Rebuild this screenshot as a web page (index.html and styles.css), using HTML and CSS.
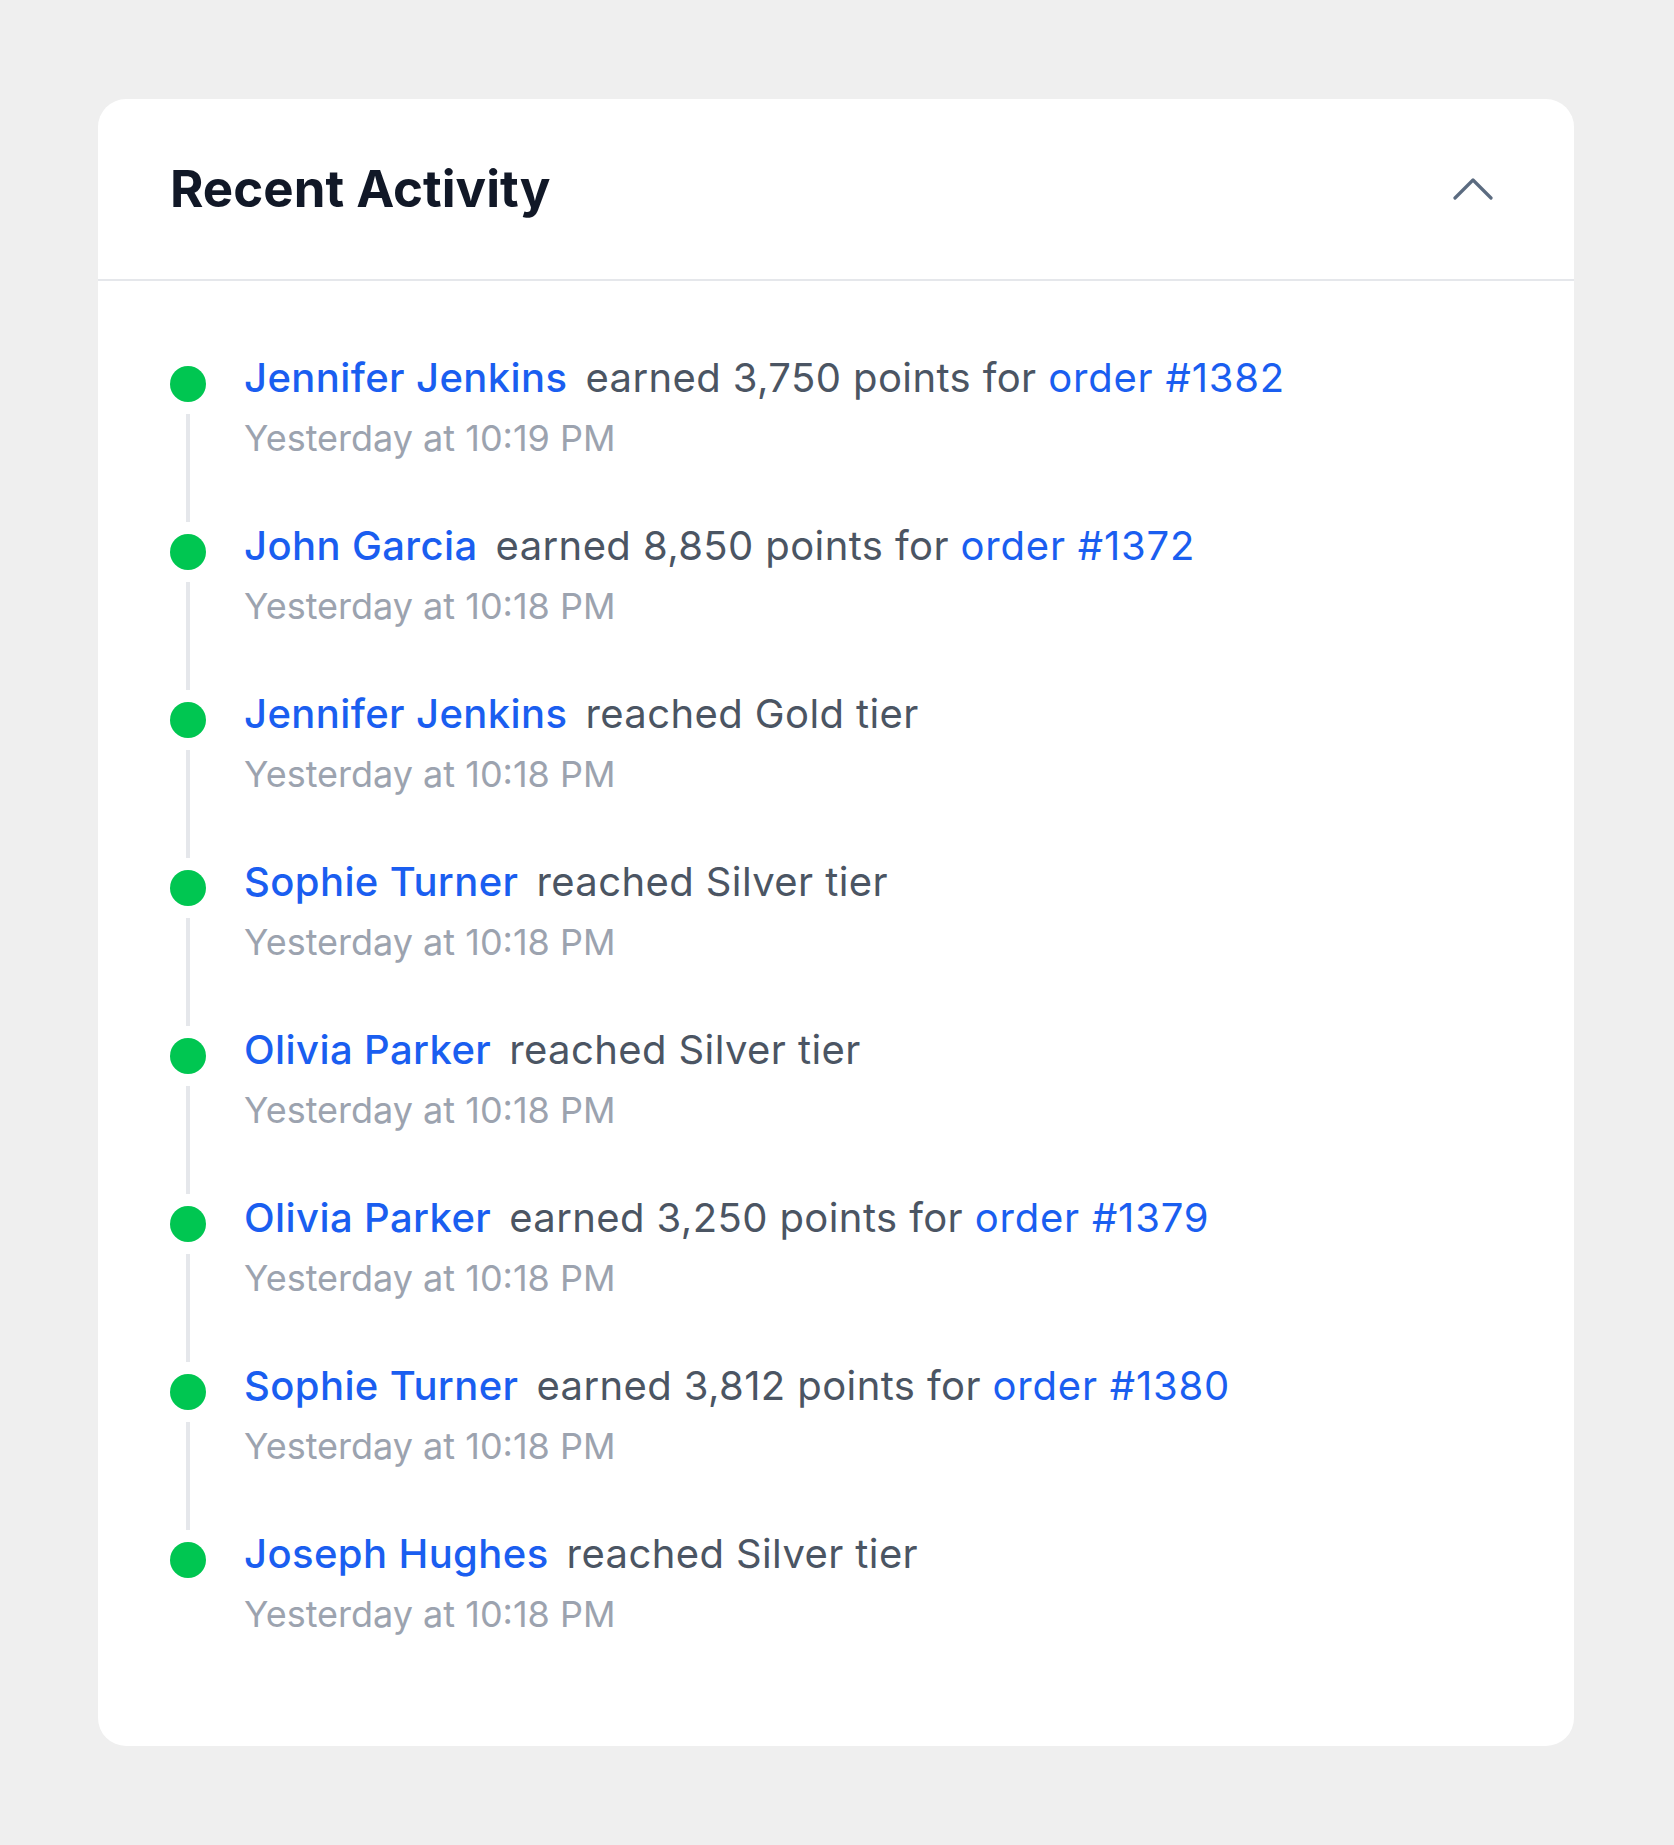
FILE: index.html
```html
<!DOCTYPE html>
<html lang="en">
<head>
    <meta charset="UTF-8">
    <meta name="viewport" content="width=device-width, initial-scale=1.0">
    <title>Recent Activity</title>
    <link rel="stylesheet" href="styles.css">
</head>
<body>
    <!-- Activity card -->
    <section class="card">
        <header class="card-header">
            <h1>Recent Activity</h1>
            <button class="toggle" aria-label="Collapse">
                <svg width="40" height="22" viewBox="0 0 40 22" fill="none">
                    <path d="M2 20 L20 2 L38 20" stroke="#5b6b80" stroke-width="3.2" stroke-linecap="round" stroke-linejoin="round"/>
                </svg>
            </button>
        </header>

        <ul class="timeline">
            <li class="item">
                <div class="marker"><span class="dot"></span><span class="line"></span></div>
                <div class="body">
                    <p class="event"><a class="name" href="#">Jennifer Jenkins</a>earned 3,750 points for <a class="link" href="#">order #1382</a></p>
                    <p class="time">Yesterday at 10:19 PM</p>
                </div>
            </li>
            <li class="item">
                <div class="marker"><span class="dot"></span><span class="line"></span></div>
                <div class="body">
                    <p class="event"><a class="name" href="#">John Garcia</a>earned 8,850 points for <a class="link" href="#">order #1372</a></p>
                    <p class="time">Yesterday at 10:18 PM</p>
                </div>
            </li>
            <li class="item">
                <div class="marker"><span class="dot"></span><span class="line"></span></div>
                <div class="body">
                    <p class="event"><a class="name" href="#">Jennifer Jenkins</a>reached Gold tier</p>
                    <p class="time">Yesterday at 10:18 PM</p>
                </div>
            </li>
            <li class="item">
                <div class="marker"><span class="dot"></span><span class="line"></span></div>
                <div class="body">
                    <p class="event"><a class="name" href="#">Sophie Turner</a>reached Silver tier</p>
                    <p class="time">Yesterday at 10:18 PM</p>
                </div>
            </li>
            <li class="item">
                <div class="marker"><span class="dot"></span><span class="line"></span></div>
                <div class="body">
                    <p class="event"><a class="name" href="#">Olivia Parker</a>reached Silver tier</p>
                    <p class="time">Yesterday at 10:18 PM</p>
                </div>
            </li>
            <li class="item">
                <div class="marker"><span class="dot"></span><span class="line"></span></div>
                <div class="body">
                    <p class="event"><a class="name" href="#">Olivia Parker</a>earned 3,250 points for <a class="link" href="#">order #1379</a></p>
                    <p class="time">Yesterday at 10:18 PM</p>
                </div>
            </li>
            <li class="item">
                <div class="marker"><span class="dot"></span><span class="line"></span></div>
                <div class="body">
                    <p class="event"><a class="name" href="#">Sophie Turner</a>earned 3,812 points for <a class="link" href="#">order #1380</a></p>
                    <p class="time">Yesterday at 10:18 PM</p>
                </div>
            </li>
            <li class="item">
                <div class="marker"><span class="dot"></span><span class="line"></span></div>
                <div class="body">
                    <p class="event"><a class="name" href="#">Joseph Hughes</a>reached Silver tier</p>
                    <p class="time">Yesterday at 10:18 PM</p>
                </div>
            </li>
        </ul>
    </section>
</body>
</html>
```

FILE: styles.css
```css
/* Basic Reset */
* {
    box-sizing: border-box;
    margin: 0;
    padding: 0;
}

body {
    font-family: Inter, "Noto Sans", Arial, sans-serif;
    background-color: #efefef;
    color: #4b5563;
    padding: 99px 100px 99px 98px;
}

.card {
    background: #fff;
    border-radius: 28px;
    overflow: hidden;
}

/* Header */
.card-header {
    height: 182px;
    display: flex;
    align-items: center;
    justify-content: space-between;
    padding: 0 72px;
    border-bottom: 2px solid #e5e7eb;
}

.card-header h1 {
    font-size: 51px;
    font-weight: 700;
    color: #111827;
    margin-top: -2px;
}

.toggle {
    background: none;
    border: none;
    cursor: pointer;
    display: flex;
    margin-right: 9px;
}

/* Timeline */
.timeline {
    list-style: none;
    padding: 69px 72px 52px;
}

.item {
    display: flex;
    gap: 38px;
    height: 168px;
}

.marker {
    width: 36px;
    display: flex;
    flex-direction: column;
    align-items: center;
    flex-shrink: 0;
}

.dot {
    width: 36px;
    height: 36px;
    margin-top: 16px;
    border-radius: 50%;
    background-color: #00c651;
}

.line {
    flex: 1;
    width: 4px;
    margin: 12px 0 -4px;
    background-color: #e5e7eb;
}

.item:last-child .line {
    display: none;
}

.event {
    font-size: 40px;
    line-height: 56px;
    letter-spacing: 0.4px;
    color: #4b5563;
}

.event a {
    color: #1a5ef0;
    text-decoration: none;
}

.name {
    font-weight: 500;
    margin-right: 18px;
}

.link {
    letter-spacing: 0.8px;
}

.time {
    font-size: 36px;
    line-height: 48px;
    margin-top: 8px;
    color: #9ca3af;
}
```
